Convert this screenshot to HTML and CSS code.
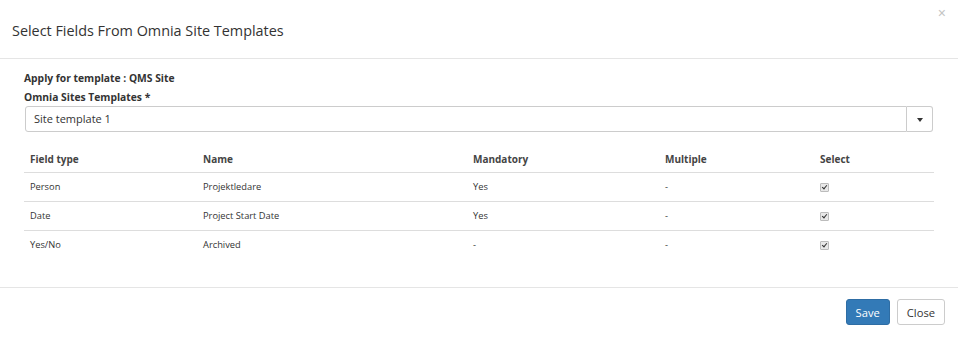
FILE: index.html
```html
<!DOCTYPE html>
<html lang="en">

<head>
    <meta charset="UTF-8">
    <meta name="viewport" content="width=device-width, initial-scale=1.0">
    <title>Select Fields From Omnia Site Templates</title>
    <link rel="stylesheet" href="styles.css">
</head>

<body>
    <div class='modal'>
        <div class='modal_header'>
            <h4 class='modal_title'>Select Fields From Omnia Site Templates</h4>
            <button class='modal_close'>&times;</button>
        </div>

        <div class='modal_body'>
            <div class='form_label'>Apply for template : QMS Site</div>
            <div class='form_label'>Omnia Sites Templates *</div>
            <div class='select_group'>
                <div class='select_value'>Site template 1</div>
                <div class='select_button'><span class='caret'></span></div>
            </div>

            <table class='field_table'>
                <thead>
                    <tr>
                        <th class='col_type'>Field type</th>
                        <th class='col_name'>Name</th>
                        <th class='col_mandatory'>Mandatory</th>
                        <th class='col_multiple'>Multiple</th>
                        <th>Select</th>
                    </tr>
                </thead>
                <tbody>
                    <tr>
                        <td>Person</td>
                        <td>Projektledare</td>
                        <td>Yes</td>
                        <td>-</td>
                        <td><span class='check'></span></td>
                    </tr>
                    <tr>
                        <td>Date</td>
                        <td>Project Start Date</td>
                        <td>Yes</td>
                        <td>-</td>
                        <td><span class='check'></span></td>
                    </tr>
                    <tr>
                        <td>Yes/No</td>
                        <td>Archived</td>
                        <td>-</td>
                        <td>-</td>
                        <td><span class='check'></span></td>
                    </tr>
                </tbody>
            </table>
        </div>

        <div class='modal_footer'>
            <button class='btn btn_primary'>Save</button>
            <button class='btn'>Close</button>
        </div>
    </div>
</body>

</html>
```

FILE: styles.css
```css
body {
    margin: 0;
    background: white;
    font-family: 'Open Sans', 'Noto Sans', sans-serif;
    color: #333;
}

.modal {
    width: 958px;
    height: 340px;
    display: flex;
    flex-direction: column;
}

.modal_header {
    position: relative;
    height: 59px;
    box-sizing: border-box;
    padding: 0 12px;
    display: flex;
    align-items: center;
    border-bottom: 1px solid #e5e5e5;
}

.modal_title {
    margin: 0;
    font-size: 14.4px;
    font-weight: normal;
    color: #333;
    padding-top: 2px;
}

.modal_close {
    position: absolute;
    top: 5px;
    right: 12px;
    border: 0;
    background: none;
    padding: 0;
    font-size: 14px;
    line-height: 16px;
    color: #c4c4c4;
    font-family: 'Liberation Sans', sans-serif;
}

.modal_body {
    flex: 1;
    padding: 11px 25px 0 24px;
}

.form_label {
    font-size: 10.3px;
    font-weight: bold;
    line-height: 16px;
    color: #333;
    margin-bottom: 3px;
}

.select_group {
    display: flex;
    height: 26px;
    margin-left: 1px;
    margin-top: -2px;
}

.select_value {
    flex: 1;
    border: 1px solid #ccc;
    border-radius: 3px 0 0 3px;
    font-size: 11px;
    line-height: 24px;
    padding: 0 8px;
    color: #333;
}

.select_button {
    width: 25px;
    border: 1px solid #ccc;
    border-left: 0;
    border-radius: 0 3px 3px 0;
    display: grid;
    place-items: center;
}

.caret {
    width: 0;
    height: 0;
    border-left: 3.5px solid transparent;
    border-right: 3.5px solid transparent;
    border-top: 4px solid #333;
    margin-top: 1px;
}

.field_table {
    width: 910px;
    margin-top: 14px;
    border-collapse: collapse;
    table-layout: fixed;
    font-size: 9.3px;
    color: #333;
}

.field_table th {
    text-align: left;
    font-size: 10px;
    font-weight: bold;
    height: 26px;
    padding: 0 6px;
    padding-top: 1px;
    border-bottom: 1px solid #ddd;
    color: #444;
    box-sizing: border-box;
}

.field_table td {
    height: 28px;
    padding: 0 6px;
    border-top: 1px solid #ddd;
}

.field_table tbody tr:first-child td {
    border-top: 0;
}

.col_type {
    width: 173px;
}

.col_name {
    width: 270px;
}

.col_mandatory {
    width: 192px;
}

.col_multiple {
    width: 155px;
}

.check {
    display: inline-block;
    width: 7px;
    height: 7px;
    border: 1px solid #bcbcbc;
    border-radius: 1px;
    background: #e8e8e8;
    position: relative;
    vertical-align: middle;
}

.check:after {
    content: '';
    position: absolute;
    left: 2px;
    top: 0;
    width: 2px;
    height: 4px;
    border-right: 1.5px solid #333;
    border-bottom: 1.5px solid #333;
    transform: rotate(40deg);
}

.modal_footer {
    height: 53px;
    box-sizing: border-box;
    border-top: 1px solid #e5e5e5;
    padding: 11px 13px 0 0;
    display: flex;
    justify-content: flex-end;
    align-items: flex-start;
    gap: 7px;
}

.btn {
    height: 26px;
    padding: 0 9px;
    font-family: 'Open Sans', 'Noto Sans', sans-serif;
    font-size: 11.2px;
    border: 1px solid #ccc;
    border-radius: 3px;
    background: white;
    color: #333;
}

.btn_primary {
    background: #337ab7;
    border-color: #2e6da4;
    color: white;
    padding: 0 9px;
}
```
